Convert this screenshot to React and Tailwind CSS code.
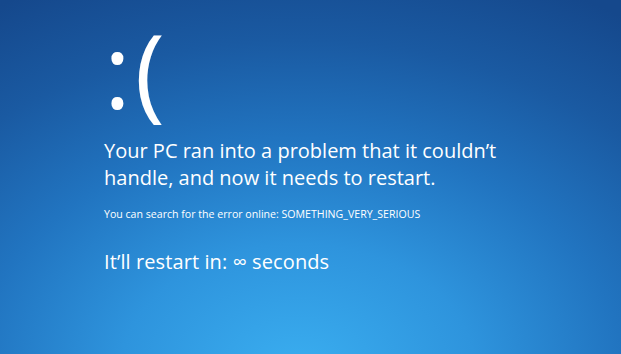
import React from 'react';

export default function App() {
  return (
    <div
      className="w-[621px] h-[354px] overflow-hidden text-white bg-[radial-gradient(ellipse_95%_120%_at_48%_105%,#3aaef0_0%,#2e94dd_30%,#2174c0_55%,#1a5aa2_78%,#15488c_100%)]"
      style={{ fontFamily: '"Open Sans", "Noto Sans", sans-serif' }}
    >
      <div className="flex flex-col items-start pl-[104px]">
        {/* sad face */}
        <div className="flex items-baseline text-[102px] leading-[140px] font-normal">
          <span>:</span>
          <span className="ml-[4px] pr-[6px]">(</span>
        </div>

        <h1 className="mt-[-3px] text-[20px] leading-[27px] font-normal">
          Your PC ran into a problem that it couldn’t
          <br />
          handle, and now it needs to restart.
        </h1>

        <p className="mt-[16px] text-[10.6px] leading-[14px]">
          You can search for the error online: SOMETHING_VERY_SERIOUS
        </p>

        <p className="mt-[27px] text-[20px] leading-[27px] tracking-[0.1px]">
          It’ll restart in: ∞ seconds
        </p>
      </div>
    </div>
  );
}
